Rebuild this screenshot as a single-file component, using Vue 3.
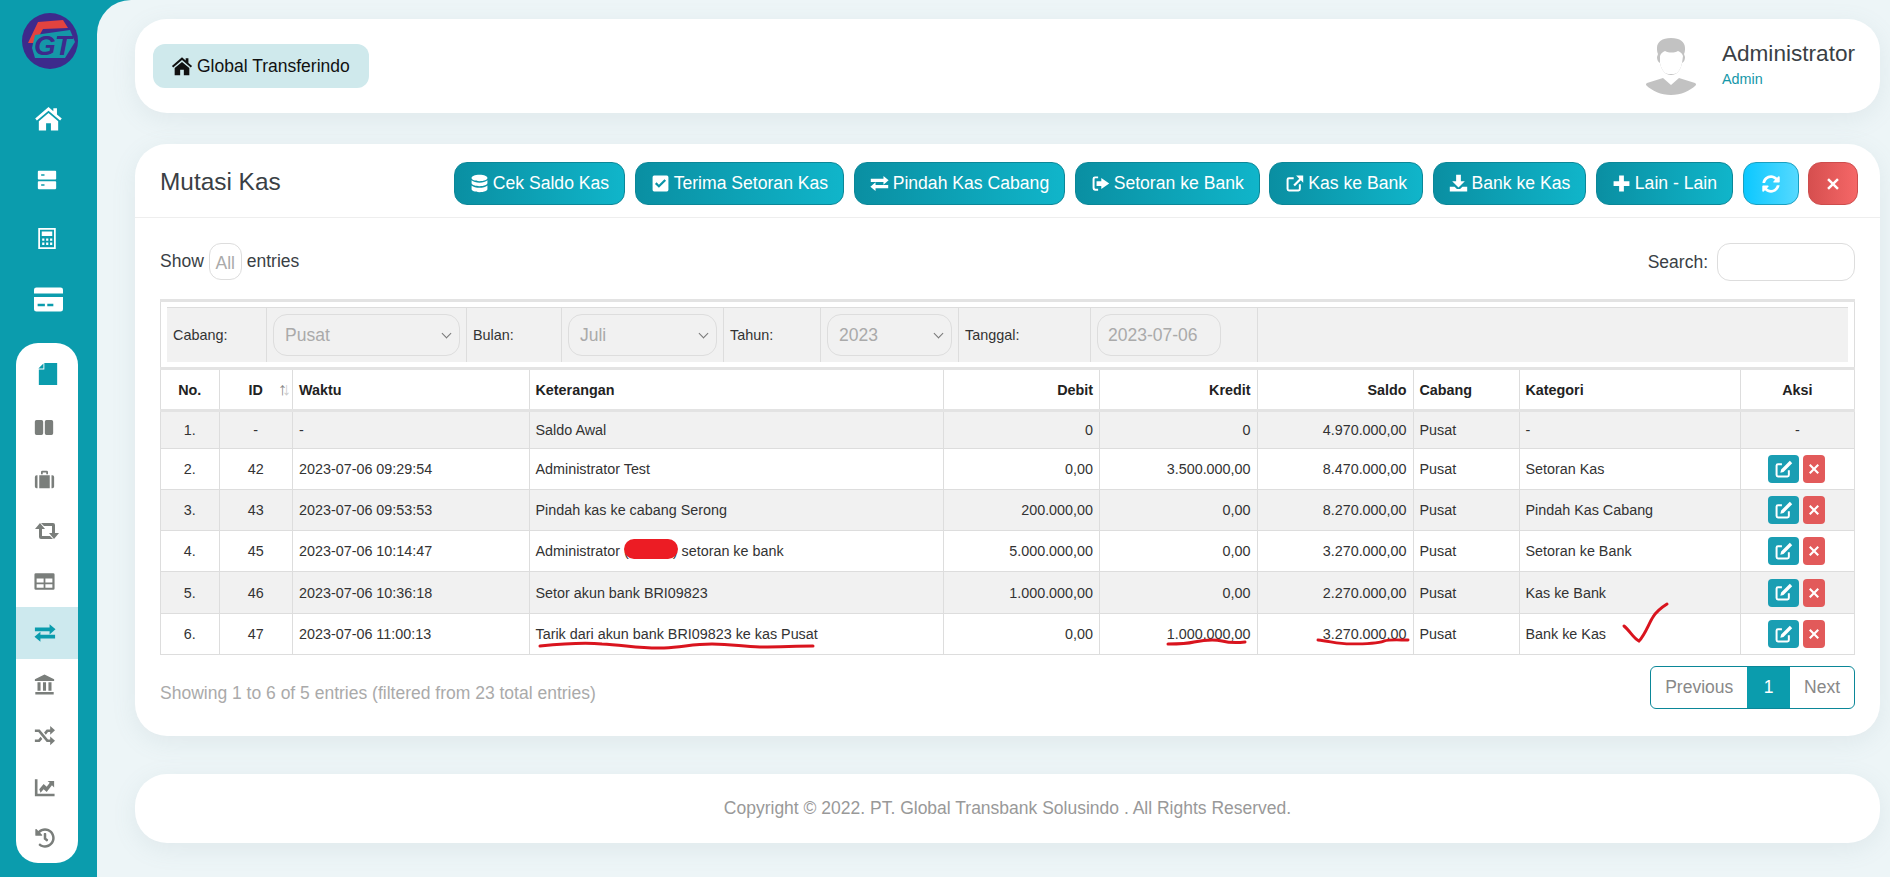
<template>
  <div class="layout">
    <aside class="sidebar">
      <svg class="logo" viewBox="0 0 56 56">
        <circle cx="28" cy="28" r="28" fill="#3d2a8c" />
        <path d="M6 30 16 9l25-2 5 8-25 1-8 14z" fill="#e2433f" />
        <path d="M13 22l35-5 5 12-10 16H13l-3-10z" fill="#1597a8" />
        <text class="logo-text" x="12" y="42">GT</text>
      </svg>

      <nav class="nav-top">
        <svg v-for="name in topNav" :key="name" :class="['nav-icon', 'ic-' + name]" viewBox="0 0 24 24">
          <path :d="icons[name]" fill-rule="evenodd" />
        </svg>
      </nav>

      <nav class="nav-panel">
        <a v-for="item in panelNav" :key="item" :class="['panel-item', { active: item === 'exchange', first: item === 'file' }]">
          <svg :class="['panel-icon', 'pi-' + item]" :viewBox="item === 'history' ? '0 0 512 512' : '0 0 24 24'">
            <path :d="icons[item]" fill-rule="evenodd" />
          </svg>
        </a>
      </nav>
    </aside>

    <main class="content">
      <header class="card topbar">
        <div class="brand">
          <svg class="brand-icon" viewBox="0 0 24 24"><path :d="icons.home" fill-rule="evenodd" /></svg>
          Global Transferindo
        </div>
        <div class="user">
          <svg class="avatar" viewBox="0 0 52 58">
            <path d="M26 1c9 0 14 4 14 10 0 2 0 4-1 6l1 3c0 3-1 5-3 6-1 5-3 8-5 10-2 1-4 2-6 2s-4-1-6-2c-2-2-4-5-5-10-2-1-3-3-3-6l1-3c-1-2-1-4-1-6C12 5 17 1 26 1z" fill="#c2c2c2" />
            <path d="M15 19c1-3 3-4 5-5 4 2 9 2 13 0 2 1 4 2 5 5l-1 7c-1 5-3 8-5 10-2 1-4 1-6 1s-4 0-6-1c-2-2-4-5-5-10z" fill="#fff" />
            <path d="M18 41l8 7 8-7 16 5c1 1 1 1 1 2-6 6-15 10-25 10S7 54 1 48c0-1 0-1 1-2z" fill="#c2c2c2" />
          </svg>
          <div class="user-text">
            <div class="user-name">Administrator</div>
            <div class="user-role">Admin</div>
          </div>
        </div>
      </header>

      <section class="card panel">
        <div class="panel-head">
          <h2 class="panel-title">Mutasi Kas</h2>
          <div class="actions">
            <button v-for="btn in actions" :key="btn.label" class="btn btn-teal">
              <svg class="btn-icon" viewBox="0 0 24 24"><path :d="icons[btn.icon]" fill-rule="evenodd" /></svg>
              {{ btn.label }}
            </button>
            <button class="btn btn-cyan">
              <svg class="btn-icon" viewBox="0 0 512 512"><path :d="icons.refresh" /></svg>
            </button>
            <button class="btn btn-red">
              <svg class="btn-icon small" viewBox="0 0 24 24"><path :d="icons.times" /></svg>
            </button>
          </div>
        </div>

        <div class="panel-body">
          <div class="table-tools">
            <div class="length">
              Show <span class="length-select">All</span> entries
            </div>
            <div class="search">
              Search: <input class="search-input" type="text" />
            </div>
          </div>

          <table class="data-table">
            <colgroup>
              <col class="c-no" /><col class="c-id" /><col class="c-time" /><col class="c-desc" />
              <col class="c-debit" /><col class="c-kredit" /><col class="c-saldo" />
              <col class="c-cabang" /><col class="c-kat" /><col class="c-aksi" />
            </colgroup>
            <thead>
              <tr class="filter-row">
                <th colspan="10">
                  <div class="filters">
                    <div class="f-cell f-label w-cabang">Cabang:</div>
                    <div class="f-cell w-cabang-s"><div class="fake-select">Pusat<span class="chev"></span></div></div>
                    <div class="f-cell f-label w-bulan">Bulan:</div>
                    <div class="f-cell w-bulan-s"><div class="fake-select">Juli<span class="chev"></span></div></div>
                    <div class="f-cell f-label w-tahun">Tahun:</div>
                    <div class="f-cell w-tahun-s"><div class="fake-select">2023<span class="chev"></span></div></div>
                    <div class="f-cell f-label w-tgl">Tanggal:</div>
                    <div class="f-cell w-tgl-s"><div class="fake-select date">2023-07-06</div></div>
                    <div class="f-rest"></div>
                  </div>
                </th>
              </tr>
              <tr class="head-row">
                <th class="center">No.</th>
                <th class="center sortable">ID<span class="sort">↑<i>↓</i></span></th>
                <th>Waktu</th>
                <th>Keterangan</th>
                <th class="right">Debit</th>
                <th class="right">Kredit</th>
                <th class="right">Saldo</th>
                <th>Cabang</th>
                <th>Kategori</th>
                <th class="center">Aksi</th>
              </tr>
            </thead>
            <tbody>
              <tr v-for="(row, i) in rows" :key="i" :class="{ striped: i % 2 === 0, first: i === 0, tall: i === 4 }">
                <td class="center">{{ i + 1 }}.</td>
                <td class="center">{{ row.id }}</td>
                <td>{{ row.time }}</td>
                <td class="mark-cell">
                  <template v-if="row.redacted">Administrator (<span class="redact"></span>) setoran ke bank</template>
                  <template v-else>{{ row.desc }}</template>
                  <svg v-if="i === 5" class="scribble s-desc" viewBox="0 0 275 8">
                    <path d="M1 5c20-2 40-4 62-2 22 1 40 5 62 4 20-1 28-4 48-4 22 0 30 3 48 3 20 0 36-1 53-1" />
                  </svg>
                </td>
                <td class="right">{{ row.debit }}</td>
                <td class="right mark-cell">
                  {{ row.kredit }}
                  <svg v-if="i === 5" class="scribble s-kredit" viewBox="0 0 80 8">
                    <path d="M1 6c10 0 18 0 26-2 10-2 20-3 28-1 8 2 14 2 23 1" />
                  </svg>
                </td>
                <td class="right mark-cell">
                  {{ row.saldo }}
                  <svg v-if="i === 5" class="scribble s-saldo" viewBox="0 0 95 9">
                    <path d="M1 3c12 1 20 4 34 4s26 0 34-3c7-2 16-1 25-1" />
                  </svg>
                </td>
                <td>{{ row.cabang }}</td>
                <td class="mark-cell">
                  {{ row.kategori }}
                  <svg v-if="i === 5" class="scribble s-check" viewBox="0 0 48 40">
                    <path d="M2 23c6 5 10 13 15 15 6-6 10-18 14-24 3-5 6-8 14-13" />
                  </svg>
                </td>
                <td class="center">
                  <template v-if="i === 0">-</template>
                  <div v-else class="row-actions">
                    <button class="mini mini-teal">
                      <svg viewBox="0 0 24 24"><path :d="icons.edit" fill-rule="evenodd" /></svg>
                    </button>
                    <button class="mini mini-red">
                      <svg viewBox="0 0 24 24"><path :d="icons.times" /></svg>
                    </button>
                  </div>
                </td>
              </tr>
            </tbody>
          </table>

          <div class="table-foot">
            <div class="info">Showing 1 to 6 of 5 entries (filtered from 23 total entries)</div>
            <div class="pager">
              <a class="page-link">Previous</a>
              <a class="page-link current">1</a>
              <a class="page-link">Next</a>
            </div>
          </div>
        </div>
      </section>

      <footer class="card footer">Copyright © 2022. PT. Global Transbank Solusindo . All Rights Reserved.</footer>
    </main>
  </div>
</template>

<script setup>
const icons = {
  home: 'M12 2.5 1 12l1.4 1.7L12 5.5l9.6 8.2L23 12l-4-3.4V3.5h-3V6z M12 7.5 4 14.3V22h6v-6h4v6h6v-7.7z',
  server: 'M2 1h20a1 1 0 0 1 1 1v8.5a1 1 0 0 1-1 1H2a1 1 0 0 1-1-1V2a1 1 0 0 1 1-1z M5 5v2h4V5z M2 13.5h20a1 1 0 0 1 1 1V22a1 1 0 0 1-1 1H2a1 1 0 0 1-1-1v-7.5a1 1 0 0 1 1-1z M5 17v2h4v-2z',
  calc: 'M2 0h20v24H2z M4 2v20h16V2z M6 4h12v5H6z M6.5 12H9v2.5H6.5z M11 12h2.5v2.5H11z M15.5 12H18v2.5h-2.5z M6.5 16.5H9v3H6.5z M11 16.5h2.5v3H11z M15.5 16.5H18v3h-2.5z',
  bankcard: 'M2 2h20a2 2 0 0 1 2 2v3H0V4a2 2 0 0 1 2-2z M0 10h24v10a2 2 0 0 1-2 2H2a2 2 0 0 1-2-2z M3 15.5v2h6v-2z M11 15.5v2h5v-2z',
  file: 'M8 0h14v24H2V7h6z M1.5 6 7 .5V6z',
  columns: 'M3 3h6a2 2 0 0 1 2 2v14a2 2 0 0 1-2 2H3a2 2 0 0 1-2-2V5a2 2 0 0 1 2-2z M15 3h6a2 2 0 0 1 2 2v14a2 2 0 0 1-2 2h-6a2 2 0 0 1-2-2V5a2 2 0 0 1 2-2z',
  briefcase: 'M4 7H3a2 2 0 0 0-2 2v11a2 2 0 0 0 2 2h1z M6 7h12v15H6z M20 7h1a2 2 0 0 1 2 2v11a2 2 0 0 1-2 2h-1z M8 6V3.5A1.5 1.5 0 0 1 9.5 2h5A1.5 1.5 0 0 1 16 3.5V6h-2V4h-4v2z',
  retweet: 'M0 10 5 4l5 6H7v7h8l3 3H6a2 2 0 0 1-2-2v-8z M24 14l-5 6-5-6h3V7H9L6 4h12a2 2 0 0 1 2 2v8z',
  table: 'M2 2.5h20A1.5 1.5 0 0 1 23.5 4v16a1.5 1.5 0 0 1-1.5 1.5H2A1.5 1.5 0 0 1 .5 20V4A1.5 1.5 0 0 1 2 2.5z M3 8.5V13h8V8.5z M13 8.5V13h8V8.5z M3 15v4h8v-4z M13 15v4h8v-4z',
  exchange: 'M1 6h16V2.5L23.5 8 17 13.500V10H1z M23 14H7v-3.5L.5 16 7 21.500V18h16z',
  bank: 'M12 .5 1 6v2h22V6z M1.5 20.5h21v3h-21z M4 9.5h3.5V19H4z M10.25 9.5h3.5V19h-3.500z M16.5 9.5H20V19h-3.5z',
  random: 'M1 5h5.500L16 16.5h2.500V13l5.500 5-5.500 5v-3.500h-4L5 8H1z M1 16.5h4l2.500-3 2 2.500-3 3.500H1z M18.5 1 24 6l-5.500 5V8H16l-2.500 3-2-2.500 3-3.500h4z',
  chart: 'M1 2.5h3V19h19.500v3H1z M6 14l5-6 3.500 3L18 6.500l-2.500-2H23V12l-2.500-2.500-6 7.500-3.500-3-3.500 4z',
  history: 'M504 255.531c.253 136.64-111.18 248.372-247.82 248.468-59.015.042-113.223-20.53-155.822-54.911-11.077-8.94-11.905-25.541-1.839-35.607l11.267-11.267c8.609-8.609 22.353-9.551 31.891-1.984C173.062 425.135 212.781 440 256 440c101.705 0 184-82.311 184-184 0-101.705-82.311-184-184-184-48.814 0-93.149 18.969-126.068 49.932l50.754 50.754c10.08 10.08 2.941 27.314-11.313 27.314H24c-8.837 0-16-7.163-16-16V38.627c0-14.254 17.234-21.393 27.314-11.314l49.372 49.372C129.209 34.136 189.552 8 256 8c136.81 0 247.747 110.78 248 247.531zm-180.912 78.784l9.823-12.63c8.138-10.463 6.253-25.542-4.21-33.679L288 256.349V152c0-13.255-10.745-24-24-24h-16c-13.255 0-24 10.745-24 24v135.651l65.409 50.874c10.463 8.137 25.541 6.253 33.679-4.21z',
  refresh: 'M370.72 133.28C339.458 104.008 298.888 87.962 255.848 88c-77.458.068-144.328 53.178-162.791 126.85-1.344 5.363-6.122 9.15-11.651 9.15H24.103c-7.498 0-13.194-6.807-11.807-14.176C33.933 94.924 134.813 8 256 8c66.448 0 126.791 26.136 171.315 68.685L463.03 40.97C478.149 25.851 504 36.559 504 57.941V192c0 13.255-10.745 24-24 24H345.941c-21.382 0-32.09-25.851-16.971-40.971l41.75-41.749zM32 296h134.059c21.382 0 32.09 25.851 16.971 40.971l-41.75 41.75c31.262 29.273 71.835 45.319 114.876 45.28 77.418-.07 144.315-53.144 162.787-126.849 1.344-5.363 6.122-9.15 11.651-9.15h57.304c7.498 0 13.194 6.807 11.807 14.176C478.067 417.076 377.187 504 256 504c-66.448 0-126.791-26.136-171.315-68.685L48.97 471.03C33.851 486.149 8 475.441 8 454.059V320c0-13.255 10.745-24 24-24z',
  database: 'M12 1c6 0 10 1.8 10 4s-4 4-10 4S2 7.2 2 5s4-4 10-4z M2 8c2 2 6 3 10 3s8-1 10-3v3.5c0 2.2-4 4-10 4s-10-1.8-10-4z M2 14.5c2 2 6 3 10 3s8-1 10-3V19c0 2.2-4 4-10 4S2 21.200 2 19z',
  check: 'M4 2h16a2 2 0 0 1 2 2v16a2 2 0 0 1-2 2H4a2 2 0 0 1-2-2V4a2 2 0 0 1 2-2z M10 17.500 5 12.500l2-2 3 3 7-7 2 2z',
  signin: 'M9 3H5a3 3 0 0 0-3 3v12a3 3 0 0 0 3 3h4v-2.500H5.500a1 1 0 0 1-1-1V6.500a1 1 0 0 1 1-1H9z M13 5l10 7-10 7v-4H7V9h6z',
  external: 'M11 4H5a3 3 0 0 0-3 3v12a3 3 0 0 0 3 3h12a3 3 0 0 0 3-3v-6h-2.500v6a.5.5 0 0 1-.5.5H5a.5.5 0 0 1-.5-.5V7a.5.5 0 0 1 .5-.5h6z M14 2h9v9l-3-3-7.500 7.500-2-2L18 6z',
  download: 'M9 1h6v8h5l-8 8-8-8h5z M1 16h6l3 3h4l3-3h6v6H1z',
  plus: 'M9 2h6v7h7v6h-7v7H9v-7H2V9h7z',
  times: 'M5 2l7 7 7-7 3 3-7 7 7 7-3 3-7-7-7 7-3-3 7-7-7-7z',
  edit: 'M10 4H5a3 3 0 0 0-3 3v12a3 3 0 0 0 3 3h12a3 3 0 0 0 3-3v-6h-2.500v6a.5.5 0 0 1-.5.5H5a.5.5 0 0 1-.5-.5V7a.5.5 0 0 1 .5-.5h5z M20 1l3 3-11 11-4 1 1-4z'
}

const topNav = ['home', 'server', 'calc', 'bankcard']
const panelNav = ['file', 'columns', 'briefcase', 'retweet', 'table', 'exchange', 'bank', 'random', 'chart', 'history']

const actions = [
  { label: 'Cek Saldo Kas', icon: 'database' },
  { label: 'Terima Setoran Kas', icon: 'check' },
  { label: 'Pindah Kas Cabang', icon: 'exchange' },
  { label: 'Setoran ke Bank', icon: 'signin' },
  { label: 'Kas ke Bank', icon: 'external' },
  { label: 'Bank ke Kas', icon: 'download' },
  { label: 'Lain - Lain', icon: 'plus' }
]

const rows = [
  { id: '-', time: '-', desc: 'Saldo Awal', debit: '0', kredit: '0', saldo: '4.970.000,00', cabang: 'Pusat', kategori: '-' },
  { id: '42', time: '2023-07-06 09:29:54', desc: 'Administrator Test', debit: '0,00', kredit: '3.500.000,00', saldo: '8.470.000,00', cabang: 'Pusat', kategori: 'Setoran Kas' },
  { id: '43', time: '2023-07-06 09:53:53', desc: 'Pindah kas ke cabang Serong', debit: '200.000,00', kredit: '0,00', saldo: '8.270.000,00', cabang: 'Pusat', kategori: 'Pindah Kas Cabang' },
  { id: '45', time: '2023-07-06 10:14:47', redacted: true, debit: '5.000.000,00', kredit: '0,00', saldo: '3.270.000,00', cabang: 'Pusat', kategori: 'Setoran ke Bank' },
  { id: '46', time: '2023-07-06 10:36:18', desc: 'Setor akun bank BRI09823', debit: '1.000.000,00', kredit: '0,00', saldo: '2.270.000,00', cabang: 'Pusat', kategori: 'Kas ke Bank' },
  { id: '47', time: '2023-07-06 11:00:13', desc: 'Tarik dari akun bank BRI09823 ke kas Pusat', debit: '0,00', kredit: '1.000.000,00', saldo: '3.270.000,00', cabang: 'Pusat', kategori: 'Bank ke Kas' }
]
</script>

<style>
html, body {
  margin: 0;
  background: #0b9cad;
}
</style>

<style scoped>
.layout {
  display: flex;
  height: 877px;
  overflow: hidden;
  font-family: "Liberation Sans", Arial, sans-serif;
  font-size: 17.5px;
  color: #3a3f45;
}

/* sidebar */
.sidebar {
  width: 97px;
  flex-shrink: 0;
  background: #0b9cad;
  display: flex;
  flex-direction: column;
  align-items: flex-start;
}

.logo {
  width: 56px;
  height: 56px;
  margin: 13px 0 0 22px;
}

.logo-text {
  font-family: "Liberation Sans", sans-serif;
  font-style: italic;
  font-weight: 700;
  font-size: 28px;
  letter-spacing: -1px;
  fill: #3d2a8c;
}

.nav-top {
  display: flex;
  flex-direction: column;
  margin-top: 35px;
  padding-left: 34px;
}

.nav-icon {
  fill: #fff;
  display: block;
}

.ic-home { width: 29px; height: 29px; }
.ic-server { width: 20px; height: 20px; margin: 37px 0 0 3px; }
.ic-calc { width: 22px; height: 21px; margin: 38px 0 0 2px; }
.ic-bankcard { width: 29px; height: 29px; margin-top: 36px; }

.nav-panel {
  margin: 29px 0 0 16px;
  width: 62px;
  height: 520px;
  box-sizing: border-box;
  padding-top: 3px;
  background: #fff;
  border-radius: 22px;
  overflow: hidden;
}

.panel-item {
  display: flex;
  align-items: center;
  height: 51.3px;
  padding-left: 17.5px;
}

.panel-item.first {
  height: 56.3px;
}

.panel-item.active {
  background: #cde9ee;
}

.panel-icon {
  width: 21px;
  height: 21px;
  fill: #7a7e7b;
}

.pi-columns { width: 20px; }
.pi-retweet { width: 24px; height: 24px; margin-left: 1.5px; }
.pi-exchange { width: 22px; height: 22px; }
.pi-history { width: 20px; height: 20px; margin-left: 1px; }

.panel-item.first .panel-icon {
  fill: #0b9cad;
  width: 22px;
  height: 22px;
  margin-left: 3px;
}

.panel-item.active .panel-icon {
  fill: #0b9cad;
}

/* content */
.content {
  flex: 1;
  min-width: 0;
  background: #edf5f7;
  border-top-left-radius: 34px;
  padding: 19px 10px 0 38px;
  box-sizing: border-box;
}

.card {
  background: #fff;
  border-radius: 32px;
  box-shadow: 0 6px 24px rgba(120, 150, 160, 0.12);
}

.topbar {
  height: 94px;
  display: flex;
  align-items: center;
  justify-content: space-between;
  padding: 0 25px 0 18px;
}

.brand {
  display: flex;
  align-items: center;
  gap: 4px;
  height: 44px;
  padding: 0 19px 0 18px;
  background: #cfe9ec;
  border-radius: 12px;
  color: #111;
}

.brand-icon {
  width: 22px;
  height: 22px;
  fill: #111;
}

.user {
  display: flex;
  align-items: center;
  gap: 25px;
}

.avatar {
  width: 52px;
  height: 58px;
}

.user-text {
  margin-bottom: 5px;
}

.user-name {
  font-size: 22.6px;
  line-height: 28px;
}

.user-role {
  font-size: 14.4px;
  color: #1597a8;
  margin-top: 3px;
}

.panel {
  height: 592px;
  margin-top: 31px;
}

.panel-head {
  height: 74px;
  display: flex;
  align-items: flex-start;
  justify-content: space-between;
  padding: 18px 22px 0 25px;
  box-sizing: border-box;
  border-bottom: 1px solid #eeeeee;
}

.panel-title {
  margin: 6px 0 0;
  font-size: 24.4px;
  font-weight: 400;
  line-height: 28px;
}

.actions {
  display: flex;
  gap: 9.5px;
}

.btn {
  display: flex;
  align-items: center;
  gap: 4px;
  height: 43px;
  padding: 0 15px;
  border-radius: 13px;
  border: 1px solid #0b8798;
  color: #fff;
  font-family: inherit;
  font-size: 17.6px;
  white-space: nowrap;
}

.btn-teal {
  background: linear-gradient(90deg, #0a8fa2, #10b5ca);
}

.btn-cyan {
  background: linear-gradient(90deg, #0cc8ff, #55d9ff);
  border-color: #1a9fc0;
  padding: 0 18px;
}

.btn-red {
  background: linear-gradient(90deg, #d64f4f, #f56767);
  border-color: #cd4d4d;
  padding: 0 17px;
}

.btn-icon {
  width: 19px;
  height: 19px;
  fill: #fff;
}

.btn-cyan .btn-icon {
  width: 18px;
  height: 18px;
}

.btn-icon.small {
  width: 14px;
  height: 14px;
}

.panel-body {
  padding: 25px 25px 0;
}

.table-tools {
  height: 56px;
  display: flex;
  justify-content: space-between;
  align-items: flex-start;
}

.length {
  display: flex;
  align-items: center;
  gap: 5px;
  height: 36px;
}

.length-select {
  width: 33px;
  height: 37px;
  box-sizing: border-box;
  border: 1px solid #dddddd;
  border-radius: 12px;
  color: #aaaaaa;
  display: flex;
  align-items: center;
  justify-content: center;
  padding-top: 5px;
}

.search {
  display: flex;
  align-items: center;
  gap: 9px;
  height: 38px;
}

.search-input {
  width: 138px;
  height: 38px;
  box-sizing: border-box;
  border: 1px solid #dddddd;
  border-radius: 13px;
  background: #fff;
}

.data-table {
  width: 1695px;
  table-layout: fixed;
  border-collapse: collapse;
  font-size: 14.35px;
  color: #333;
}

.c-no { width: 58.5px; }
.c-id { width: 73.5px; }
.c-time { width: 236.5px; }
.c-desc { width: 414.5px; }
.c-debit { width: 156px; }
.c-kredit { width: 157.5px; }
.c-saldo { width: 156px; }
.c-cabang { width: 106px; }
.c-kat { width: 221px; }
.c-aksi { width: 114.5px; }

.data-table th,
.data-table td {
  border: 1px solid #dddddd;
  padding: 0 6px;
  text-align: left;
  white-space: nowrap;
}

.filter-row th {
  padding: 5px 6px;
  height: 55px;
  border-width: 3px 1px;
  border-color: #e3e3e3 #dddddd;
  font-weight: 400;
}

.filters {
  display: flex;
  background: #f1f1f1;
  border-top: 1px solid #dddddd;
  height: 55px;
  box-sizing: border-box;
  font-size: 14.4px;
}

.f-cell {
  display: flex;
  align-items: center;
  padding: 0 6px;
  box-sizing: border-box;
  border-right: 1px solid #dddddd;
}

.f-label { color: #333; }
.w-cabang { width: 100px; }
.w-cabang-s { width: 200px; }
.w-bulan { width: 95px; }
.w-bulan-s { width: 162px; }
.w-tahun { width: 97px; }
.w-tahun-s { width: 138px; }
.w-tgl { width: 132px; }
.w-tgl-s { width: 167px; }
.f-rest { flex: 1; }

.fake-select {
  position: relative;
  flex: 1;
  height: 42px;
  box-sizing: border-box;
  display: flex;
  align-items: center;
  padding-left: 11px;
  border: 1px solid #dddddd;
  border-radius: 14px;
  background: #f1f1f1;
  color: #aaaaaa;
  font-size: 17.5px;
}

.fake-select.date {
  flex: 0 0 124px;
  padding-left: 10px;
}

.chev {
  position: absolute;
  right: 9px;
  top: 15px;
  width: 6px;
  height: 6px;
  border-right: 1px solid #777;
  border-bottom: 1px solid #777;
  transform: rotate(45deg);
}

.head-row th {
  height: 39px;
  font-weight: 700;
  color: #222;
  border-bottom: 3px solid #e3e3e3;
}

.center { text-align: center !important; }
.right { text-align: right !important; }

.sortable { position: relative; }

.sort {
  position: absolute;
  right: 6px;
  top: 9px;
  font-size: 18px;
  font-weight: 400;
  color: #888;
  letter-spacing: -5px;
}

.sort i {
  font-style: normal;
  color: #ccc;
}

tbody tr { height: 41px; }
tbody tr.first { height: 38px; }
tbody tr.tall { height: 42px; }
tbody tr.striped { background: #f1f1f1; }

.mark-cell { position: relative; }

.redact {
  display: inline-block;
  position: relative;
  width: 44px;
  height: 10px;
}

.redact::after {
  content: "";
  position: absolute;
  left: -5px;
  top: -7px;
  width: 54px;
  height: 20px;
  background: #ec1c24;
  border-radius: 10px;
}

.scribble {
  position: absolute;
  overflow: visible;
  fill: none;
  stroke: #d9141e;
  stroke-width: 3;
  stroke-linecap: round;
}

.s-desc { left: 9px; top: 27px; width: 275px; height: 8px; }
.s-kredit { left: 67px; top: 24px; width: 80px; height: 8px; }
.s-saldo { left: 59px; top: 23px; width: 92px; height: 9px; }
.s-check { left: 102px; top: -11px; width: 48px; height: 40px; }

.row-actions {
  display: flex;
  justify-content: center;
  gap: 4px;
  margin-left: -1px;
}

.mini {
  height: 28px;
  padding: 0;
  display: flex;
  align-items: center;
  justify-content: center;
  border: none;
  border-radius: 4px;
}

.mini svg {
  fill: #fff;
}

.mini-teal {
  width: 31px;
  background: #1a9eb3;
}

.mini-teal svg { width: 19px; height: 19px; }

.mini-red {
  width: 22px;
  background: #e25a5a;
}

.mini-red svg { width: 12px; height: 12px; }

.table-foot {
  display: flex;
  justify-content: space-between;
  align-items: flex-start;
  margin-top: 11px;
}

.info {
  color: #aaaaaa;
  margin-top: 17px;
}

.pager {
  display: flex;
  height: 43px;
  border: 1px solid #0b8798;
  border-radius: 6px;
  overflow: hidden;
  box-sizing: border-box;
}

.page-link {
  display: flex;
  align-items: center;
  padding: 0 14px;
  color: #888;
}

.page-link.current {
  background: #0b9cad;
  color: #fff;
  padding: 0 16.5px;
}

.footer {
  height: 69px;
  margin-top: 38px;
  display: flex;
  align-items: center;
  justify-content: center;
  color: #999;
}
</style>
